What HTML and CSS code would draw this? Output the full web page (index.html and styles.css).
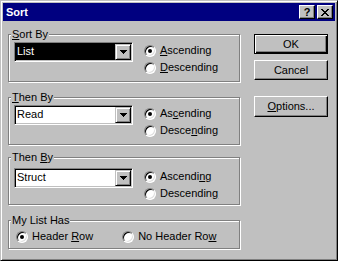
FILE: index.html
```html
<!DOCTYPE html>
<html lang="en">
<head>
    <meta charset="UTF-8">
    <title>Sort</title>
    <link rel="stylesheet" href="styles.css">
</head>
<body>
    <div class="window">
        <div class="titlebar">
            <span class="title">Sort</span>
            <div class="title-buttons">
                <span class="tbtn help">?</span>
                <span class="tbtn">
                    <svg width="8" height="7" viewBox="0 0 8 7"><path d="M0 0h2v1H0zM6 0h2v1H6zM1 1h2v1H1zM5 1h2v1H5zM2 2h4v1H2zM3 3h2v1H3zM2 4h4v1H2zM1 5h2v1H1zM5 5h2v1H5zM0 6h2v1H0zM6 6h2v1H6z" fill="#000"/></svg>
                </span>
            </div>
        </div>

        <div class="content">
            <div class="groups">
                <div class="group">
                    <span class="legend"><u>S</u>ort By</span>
                    <div class="combo focused">
                        <span class="combo-text">List</span>
                        <span class="combo-btn"><svg width="7" height="4" viewBox="0 0 7 4"><path d="M0 0h7v1H0zM1 1h5v1H1zM2 2h3v1H2zM3 3h1v1H3z" fill="#000"/></svg></span>
                    </div>
                    <div class="radios">
                        <div class="radio"><span class="dot checked"></span><span><u>A</u>scending</span></div>
                        <div class="radio"><span class="dot"></span><span><u>D</u>escending</span></div>
                    </div>
                </div>

                <div class="group">
                    <span class="legend"><u>T</u>hen By</span>
                    <div class="combo">
                        <span class="combo-text">Read</span>
                        <span class="combo-btn"><svg width="7" height="4" viewBox="0 0 7 4"><path d="M0 0h7v1H0zM1 1h5v1H1zM2 2h3v1H2zM3 3h1v1H3z" fill="#000"/></svg></span>
                    </div>
                    <div class="radios">
                        <div class="radio"><span class="dot checked"></span><span>As<u>c</u>ending</span></div>
                        <div class="radio"><span class="dot"></span><span>Desce<u>n</u>ding</span></div>
                    </div>
                </div>

                <div class="group tight">
                    <span class="legend">Then <u>B</u>y</span>
                    <div class="combo">
                        <span class="combo-text">Struct</span>
                        <span class="combo-btn"><svg width="7" height="4" viewBox="0 0 7 4"><path d="M0 0h7v1H0zM1 1h5v1H1zM2 2h3v1H2zM3 3h1v1H3z" fill="#000"/></svg></span>
                    </div>
                    <div class="radios">
                        <div class="radio"><span class="dot checked"></span><span>Ascendi<u>n</u>g</span></div>
                        <div class="radio"><span class="dot"></span><span>Descendin<u>g</u></span></div>
                    </div>
                </div>

                <div class="group small">
                    <span class="legend">My List Has</span>
                    <div class="radio"><span class="dot checked"></span><span>Header <u>R</u>ow</span></div>
                    <div class="radio"><span class="dot"></span><span>No Header Ro<u>w</u></span></div>
                </div>
            </div>

            <div class="buttons">
                <div class="btn default">OK</div>
                <div class="btn">Cancel</div>
                <div class="btn spaced"><span><u>O</u>ptions...</span></div>
            </div>
        </div>
    </div>
</body>
</html>
```

FILE: styles.css
```css
body {
    margin: 0;
    background-color: #c0c0c0;
    color: #000;
    font-family: "Liberation Sans", Arial, sans-serif;
    font-size: 11px;
    line-height: 13px;
}
.window {
    width: 338px;
    height: 261px;
    box-sizing: border-box;
    padding: 2px;
    background-color: #c0c0c0;
    border: 1px solid;
    border-color: #c0c0c0 #000 #000 #c0c0c0;
    box-shadow: inset 1px 1px #fff, inset -1px -1px #808080;
}
.titlebar {
    height: 18px;
    display: flex;
    align-items: center;
    justify-content: space-between;
    padding: 0 2px 0 3px;
    background-color: #000080;
    color: #fff;
}
.title {
    font-weight: bold;
}
.title-buttons {
    display: flex;
    gap: 2px;
}
.tbtn {
    width: 16px;
    height: 14px;
    box-sizing: border-box;
    display: flex;
    align-items: center;
    justify-content: center;
    background-color: #c0c0c0;
    border: 1px solid;
    border-color: #fff #000 #000 #fff;
    box-shadow: inset -1px -1px #808080;
    color: #000;
}
.tbtn.help {
    font-weight: bold;
    font-size: 11px;
}
.content {
    display: flex;
    gap: 14px;
    padding: 13px 0 0 5px;
}
.groups {
    width: 232px;
    display: flex;
    flex-direction: column;
}
.group {
    position: relative;
    height: 48px;
    box-sizing: border-box;
    display: flex;
    align-items: flex-start;
    gap: 11px;
    padding: 7px 0 0 5px;
    border: 1px solid #808080;
    box-shadow: inset 1px 1px #fff, 1px 1px #fff;
}
.group + .group {
    margin-top: 15px;
}
.group.tight {
    margin-top: 12px;
    padding-top: 10px;
}
.group.small {
    height: 29px;
    padding-left: 7px;
    gap: 29px;
}
.legend {
    position: absolute;
    top: -7px;
    left: 2px;
    padding: 0 1px;
    background-color: #c0c0c0;
}
.combo {
    width: 119px;
    height: 20px;
    box-sizing: border-box;
    display: flex;
    padding: 1px;
    background-color: #fff;
    border: 1px solid;
    border-color: #808080 #fff #fff #808080;
    box-shadow: inset 1px 1px #000, inset -1px -1px #c0c0c0;
}
.combo-text {
    flex: 1;
    padding-left: 1px;
    line-height: 15px;
}
.combo.focused .combo-text {
    background-color: #000;
    color: #fff;
}
.combo-btn {
    width: 16px;
    height: 16px;
    box-sizing: border-box;
    display: flex;
    align-items: center;
    justify-content: center;
    background-color: #c0c0c0;
    border: 1px solid;
    border-color: #c0c0c0 #000 #000 #c0c0c0;
    box-shadow: inset 1px 1px #fff, inset -1px -1px #808080;
}
.radios {
    display: flex;
    flex-direction: column;
}
.radio {
    height: 17px;
    display: flex;
    align-items: center;
    gap: 4px;
}
.dot {
    width: 12px;
    height: 12px;
    box-sizing: border-box;
    display: flex;
    align-items: center;
    justify-content: center;
    border-radius: 50%;
    background-color: #fff;
    border: 1px solid;
    border-color: #808080 #fff #fff #808080;
    box-shadow: inset 1px 1px #000, inset -1px -1px #dfdfdf;
}
.dot.checked::after {
    content: "";
    width: 4px;
    height: 4px;
    border-radius: 50%;
    background-color: #000;
}
.buttons {
    width: 74px;
    display: flex;
    flex-direction: column;
}
.btn {
    height: 20px;
    box-sizing: border-box;
    display: flex;
    align-items: center;
    justify-content: center;
    border: 1px solid;
    border-color: #fff #000 #000 #fff;
    box-shadow: inset -1px -1px #808080;
}
.btn.default {
    border-color: #000;
    box-shadow: inset 1px 1px #fff, inset -1px -1px #000, inset -2px -2px #808080;
}
.btn + .btn {
    margin-top: 6px;
}
.btn.spaced {
    margin-top: 16px;
    height: 21px;
}
```
